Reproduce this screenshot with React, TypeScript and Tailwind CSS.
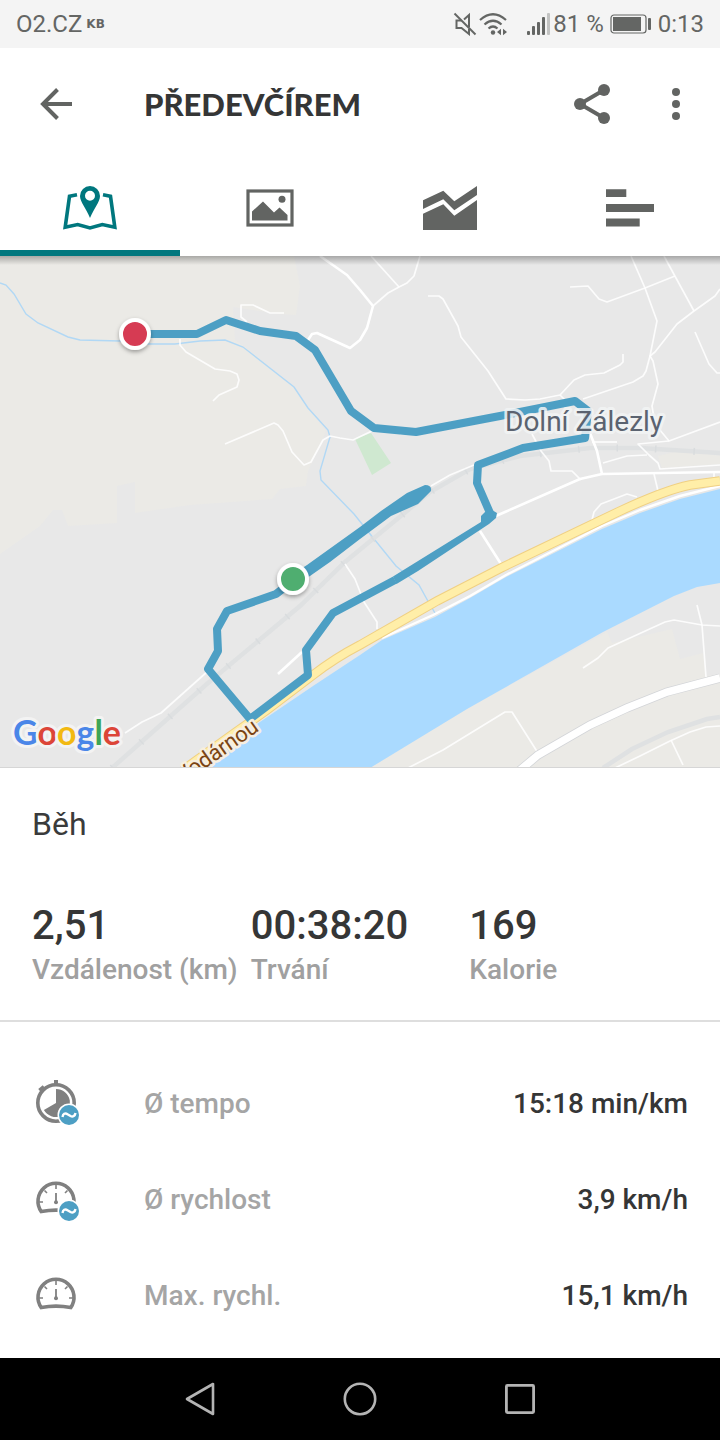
import type { ReactNode } from "react";

interface Stat {
  value: string;
  label: string;
}

interface DetailRow {
  icon: ReactNode;
  label: string;
  value: string;
}

const AverageBadge = () => (
  <>
    <circle cx="37" cy="35" r="11.5" fill="#fff" />
    <circle cx="37" cy="35" r="10" fill="#4d9fc4" />
    <path
      d="M30.5 37 C31 34 33 32.5 35.5 34.2 L38.5 36 C41 37.2 43 35.8 43.5 33"
      fill="none"
      stroke="#fff"
      strokeWidth="2.4"
    />
  </>
);

const StopwatchIcon = () => (
  <svg viewBox="0 0 48 48" className="size-12 text-[#808080]" fill="none" aria-hidden="true">
    <circle cx="24" cy="23" r="18.2" stroke="currentColor" strokeWidth="3.6" />
    <path d="M24 0 V5 M7.5 10.5 L12 6.8" stroke="currentColor" strokeWidth="4" />
    <path d="M24 23 V9 A14 14 0 1 1 11.9 30 Z" fill="currentColor" />
    <AverageBadge />
  </svg>
);

const GaugeIcon = ({ average = false }: { average?: boolean }) => (
  <svg viewBox="0 0 48 48" className="size-12 text-[#808080]" fill="none" stroke="currentColor" aria-hidden="true">
    <path d="M9.3 35.6 A18 18 0 1 1 38.7 35.6 Q24 32.6 9.3 35.6 Z" strokeWidth="3.6" />
    <path
      d="M24 8 V13 M7 26 H11 M37 26 H41 M12.5 14.5 L15 17 M35.5 14.5 L33 17"
      strokeWidth="1.6"
    />
    <path d="M24 17 V26" strokeWidth="1.8" />
    <circle cx="24" cy="26.3" r="2" fill="currentColor" stroke="none" />
    {average && (
      <g stroke="none">
        <AverageBadge />
      </g>
    )}
  </svg>
);

const stats: Stat[] = [
  { value: "2,51", label: "Vzdálenost (km)" },
  { value: "00:38:20", label: "Trvání" },
  { value: "169", label: "Kalorie" },
];

const details: DetailRow[] = [
  { icon: <StopwatchIcon />, label: "Ø tempo", value: "15:18 min/km" },
  { icon: <GaugeIcon average />, label: "Ø rychlost", value: "3,9 km/h" },
  { icon: <GaugeIcon />, label: "Max. rychl.", value: "15,1 km/h" },
];

const tabs = [
  {
    name: "Mapa",
    icon: (
      <svg viewBox="0 0 54 44" className="h-11 w-[54px]" fill="none" aria-hidden="true">
        <path
          d="M14 8.8 L6.5 10.3 L2.2 41.3 L14.7 38.5 L27 42 L39.3 38.5 L51.8 41.3 L47.5 10.3 L40 8.8"
          stroke="currentColor"
          strokeWidth="3.6"
        />
        <path
          fillRule="evenodd"
          d="M27 0 A10 10 0 0 1 37 10 C37 16 31 22 27 32 C23 22 17 16 17 10 A10 10 0 0 1 27 0 Z M27 4.8 A5 5 0 1 0 27 14.8 A5 5 0 1 0 27 4.8 Z"
          fill="currentColor"
        />
      </svg>
    ),
  },
  {
    name: "Fotky",
    icon: (
      <svg viewBox="0 0 48 38" className="h-[38px] w-12" aria-hidden="true">
        <rect x="2" y="2" width="44" height="34" fill="none" stroke="currentColor" strokeWidth="3.2" />
        <path d="M6 31.5 V22.5 L17 12.5 L28 23.5 L33.5 18.5 L41.5 26 V31.5 Z" fill="currentColor" />
        <circle cx="36" cy="10.3" r="3.5" fill="currentColor" />
      </svg>
    ),
  },
  {
    name: "Grafy",
    icon: (
      <svg viewBox="0 0 54 44" className="h-11 w-[54px]" fill="currentColor" aria-hidden="true">
        <path d="M0 14.3 L20.3 4.7 L31.3 15.3 L54 0 V9 L31.3 24.3 L20.3 13.3 L0 23 Z" />
        <path d="M0 27.7 L20.3 18.3 L31.3 29.7 L54 14 V44 H0 Z" />
      </svg>
    ),
  },
  {
    name: "Mezičasy",
    icon: (
      <svg viewBox="0 0 48 38" className="h-[38px] w-12" fill="currentColor" aria-hidden="true">
        <path d="M0 .3 H20.3 V8 H0 Z M0 15 H48 V23 H0 Z M0 29.5 H33.7 V37.5 H0 Z" />
      </svg>
    ),
  },
];

// minor streets, all drawn with the same thin white line
const streets = [
  "247,66 241,61 241,49 253,49 270,57 284,57",
  "180,83 180,89 186,96 215,113 230,115 237,118 239,124 237,131 219,139 213,145",
  "225,188 274,167 278,169 283,175 292,196 304,209 311,206 323,184 330,180 340,182 353,184 374,174",
  "371,0 399,31",
  "420,0 414,20 407,27 399,31 388,37 373,50",
  "428,40 439,40 443,43 458,70 461,81 488,115 506,143 525,144 540,143 560,139 574,124 585,119 604,117 620,109 623,106 623,98",
  "560,139 566,145",
  "583,143 633,126 643,120 646,115 650,100 657,65 645,32 631,0",
  "570,31 588,30 599,43 607,46 645,32 675,20",
  "664,0 694,55",
  "720,33 715,40 694,55 677,68 655,96 650,100 653,105 658,128 652,150 655,168 669,185 720,166",
  "695,76 709,108 717,117 720,117",
  "603,207 627,200 647,199",
  "592,186 617,186",
  "669,185 638,188 649,199 658,207 660,213 720,209",
  "532,178 541,195 549,205 551,215 572,215 581,224",
  "654,218 658,235",
  "592,264 594,256 601,248 627,238 637,241",
  "714,215 714,224",
  "431,230 450,219 474,209",
  "400,178 466,169 500,163",
  "345,308 355,323 364,346 377,366 377,373",
  "208,415 161,457 142,466 125,477",
  "583,412 598,402 608,392 665,366 674,364 702,369 720,370",
  "697,349 702,369 706,421",
  "408,512 443,494 505,456 512,456 538,497",
  "615,512 640,500 670,485 690,476 706,471 720,470",
  "671,484 683,509",
];

const collectors = [
  "320,0 347,19 360,34 373,50 367,72 360,84 350,92 317,77 312,78 308,84",
  "489,263 505,256 580,223 602,218 720,216",
  "588,172 597,195 602,218",
  "480,275 501,308",
  "278,418 302,396",
];

const ActivityMap = () => (
  <svg viewBox="0 0 720 512" className="block h-auto w-full" fill="none" role="img" aria-label="Trasa aktivity">
    <defs>
      <linearGradient id="bar-shadow" x1="0" y1="0" x2="0" y2="1">
        <stop offset="0" stopColor="#000" stopOpacity="0.28" />
        <stop offset="1" stopColor="#000" stopOpacity="0" />
      </linearGradient>
      <filter id="marker-shadow" x="-50%" y="-50%" width="200%" height="200%">
        <feDropShadow dx="0" dy="2" stdDeviation="2" floodOpacity="0.35" />
      </filter>
    </defs>

    {/* land */}
    <rect width="720" height="512" fill="#e8e8e8" />
    <g fill="#ebeae6">
      <path d="M0 0 H294 L300 30 L296 59 L280 58 L233 51 L235 84 L245 91 L294 131 L308 152 L326 175 L308 215 L306 230 L280 233 L272 243 L190 249 L135 257 V226 L117 230 V267 L68 270 L62 254 L53 254 L40 270 L0 298 Z" />
      <path d="M370 512 L467 453 L607 376 L612 387 L672 373 L680 403 L703 397 L706 420 L720 418 V512 Z" />
      <path d="M658 200 L682 194 L720 200 V208 L662 212 Z" />
    </g>
    <path d="M355 183 L371 177 L391 207 L372 219 Z" fill="#cfe8d0" />

    {/* water */}
    <path
      d="M0 27 L6 29 L14 38 L26 58 L38 67 L68 81 L80 84 L120 85 L150 88 L175 88 L200 85 L225 84 L243 91 L294 131 L308 152 L328 174 L330 181 L320 215 L321 224 L354 258 L366 273 L396 310 L419 329 L429 347 L435 357"
      stroke="#b1d8f5"
      strokeWidth="1.4"
    />
    <path
      d="M200 512 L257 468 L313 430 L360 399 L382 384 L435 361 L470 342 L506 321 L602 273 L640 257 L680 243 L720 233 V327 L697 331 L674 340 L603 376 L467 453 L370 512 Z"
      fill="#aadaff"
    />

    {/* railway */}
    <g stroke="#dfe1e2" strokeWidth="4.5">
      <path d="M112 512 L208 427 L300 350 L345 306 L430 236 L470 213 L520 200 L590 192 L640 192 L720 197" />
      <path d="M603 512 L632 493 L668 476 L707 463 L720 461" />
    </g>
    <path
      d="M112 512 L208 427 L300 350 L345 306 L430 236 L470 213 L520 200 L590 192 L640 192 L720 197"
      stroke="#d9dcde"
      strokeWidth="7"
      strokeDasharray="1.5 37"
    />

    {/* roads */}
    <g stroke="#fff" strokeLinejoin="round">
      {streets.map((points) => (
        <polyline key={points} points={points} strokeWidth="1.7" strokeOpacity="0.85" />
      ))}
      {collectors.map((points) => (
        <polyline key={points} points={points} strokeWidth="2.6" />
      ))}
      <path d="M382 382 L433 359 L470 340 L506 319 L602 270 L640 254 L680 240 L720 230" strokeWidth="2.4" />
    </g>
    <path d="M519 515 L538 499 L590 469 L627 452 L667 436 L720 422" stroke="#d3d5d8" strokeWidth="9" />
    <path d="M519 515 L538 499 L590 469 L627 452 L667 436 L720 422" stroke="#fff" strokeWidth="7.5" />
    <path
      d="M183 514 L233 478 L267 454 L313 419 Q335 402 360 389 L437 345 L503 311 L618 256 Q665 234 690 229 L720 225"
      stroke="#f0d083"
      strokeWidth="9.5"
    />
    <path
      d="M183 514 L233 478 L267 454 L313 419 Q335 402 360 389 L437 345 L503 311 L618 256 Q665 234 690 229 L720 225"
      stroke="#ffeea8"
      strokeWidth="7.5"
    />

    {/* recorded track */}
    <g stroke="#4d9fc4" strokeWidth="8" strokeLinejoin="round">
      <path d="M135 78 H197 L226 64 L260 75 L296 80 L315 94 L351 155 L374 172 L416 176 L500 160 L575 145 L588 155 L585 182 L523 192 L478 209 L477 227 L490 257" />
      <path d="M395 324 L333 357 L306 394 L308 419 L250 463 L208 413 L218 395 L217 373 L227 355 L276 338 L293 325" />
    </g>
    <g fill="#4d9fc4">
      <path d="M481 266 L393 320.5 L396.500 328 L418 315 L489 268 L496 262 L497 257 L492 254 L485 256 L481 260 Z" />
      <path d="M293 318 L307 309 L360 271 L381 255 L407 237 L425 229 Q432 229 431 235 L418 248 L391 260 L360 283 L330 306 L310 320 L293 330 Z" />
    </g>

    {/* labels */}
    <text
      x="505"
      y="175"
      fontSize="28"
      fill="#5b6370"
      stroke="#f2f4f5"
      strokeOpacity="0.85"
      strokeWidth="6"
      strokeLinejoin="round"
      paintOrder="stroke"
      className="font-['Roboto',sans-serif]"
    >
      Dolní Zálezly
    </text>
    <text
      x="260"
      y="474"
      fontSize="22"
      textAnchor="end"
      transform="rotate(-35 260 474)"
      fill="#7b4413"
      stroke="#f7efdf"
      strokeWidth="5"
      strokeLinejoin="round"
      paintOrder="stroke"
      className="font-['Roboto',sans-serif]"
    >
      Vodárnou
    </text>
    <text
      x="13"
      y="489"
      fontSize="34"
      fontWeight="700"
      stroke="#f3f3f3"
      strokeWidth="6"
      strokeLinejoin="round"
      paintOrder="stroke"
      className="font-['Lato',sans-serif]"
    >
      <tspan fill="#4a86e8">G</tspan>
      <tspan fill="#dc4538">o</tspan>
      <tspan fill="#f2b912">o</tspan>
      <tspan fill="#4a86e8">g</tspan>
      <tspan fill="#3da456">l</tspan>
      <tspan fill="#dc4538">e</tspan>
    </text>

    {/* start and finish */}
    <g stroke="#fff" strokeWidth="4" filter="url(#marker-shadow)">
      <circle cx="135" cy="78" r="14" fill="#d63a53" />
      <circle cx="293" cy="323" r="14" fill="#4fae70" />
    </g>

    <rect width="720" height="9" fill="url(#bar-shadow)" />
    <rect y="511" width="720" height="1" fill="#d6d6d6" />
  </svg>
);

const StatusBar = () => (
  <div className="flex h-12 items-center justify-between bg-[#f4f4f4] px-4 text-2xl text-[#646664]">
    <div className="flex items-center gap-1">
      <span>O2.CZ</span>
      <span className="font-['DejaVu_Sans',sans-serif] text-xs font-bold">KB</span>
    </div>
    <div className="flex items-center">
      <svg viewBox="0 0 24 24" className="mr-0.5 size-6" fill="none" stroke="currentColor" strokeWidth="2" aria-hidden="true">
        <path d="M16 15 V3 L11 7.5 M8.5 8.5 H3.5 V16 H8.5 L16 22 V17" />
        <path d="M1.5 1.5 L22.5 22.5" />
      </svg>
      <svg viewBox="0 0 28 24" className="mr-5 h-6 w-7" fill="none" stroke="currentColor" strokeWidth="2.2" aria-hidden="true">
        <path d="M1 8 Q14 -3.5 27 8 M5.5 12.5 Q14 5 22.5 12.5 M9.5 16.5 Q14 12.5 18.5 16.5" />
        <circle cx="14" cy="20.5" r="2.2" fill="currentColor" stroke="none" />
        <path d="M18 20 L22 16.8 V23.2 Z M28 20 L24 16.8 V23.2 Z" fill="currentColor" stroke="none" />
      </svg>
      <svg viewBox="0 0 24 24" className="mr-0.5 size-6" fill="currentColor" aria-hidden="true">
        <rect x="0" y="19" width="3" height="4" rx="1" />
        <rect x="5" y="14" width="3" height="9" rx="1" />
        <rect x="10" y="10" width="3" height="13" rx="1" />
        <rect x="15" y="5" width="3" height="18" rx="1" />
        <rect x="20" y="1" width="3" height="22" rx="1" opacity="0.35" />
      </svg>
      <span>81 %</span>
      <svg viewBox="0 0 42 20" className="mx-1.5 h-5 w-[42px]" fill="currentColor" aria-hidden="true">
        <rect x="1" y="1" width="35" height="18" rx="3" fill="none" stroke="currentColor" strokeWidth="1.2" />
        <rect x="3" y="3" width="28" height="14" />
        <rect x="38" y="4" width="3" height="12" rx="1" />
      </svg>
      <span>0:13</span>
    </div>
  </div>
);

const App = () => {
  return (
    <div className="flex min-h-screen flex-col bg-white font-['Roboto',sans-serif]">
      <StatusBar />

      <header className="flex h-28 items-center px-4 text-[#626462]">
        <button type="button" aria-label="Zpět" className="flex size-20 items-center justify-center">
          <svg viewBox="0 0 32 32" className="size-8" fill="none" stroke="currentColor" strokeWidth="4" aria-hidden="true">
            <path d="M32 16 H3 M17.5 1.5 L3 16 L17.5 30.5" />
          </svg>
        </button>
        <h1 className="ml-12 flex-1 font-['Lato',sans-serif] text-[31px] leading-10 font-black text-[#353636]">
          PŘEDEVČÍREM
        </h1>
        <div className="flex gap-7">
          <button type="button" aria-label="Sdílet" className="flex size-14 items-center justify-center">
            <svg viewBox="0 0 36 40" className="h-10 w-9" fill="currentColor" aria-hidden="true">
              <path d="M30 6 L6 20 L30 34" fill="none" stroke="currentColor" strokeWidth="4" />
              <circle cx="30" cy="6" r="6" />
              <circle cx="6" cy="20" r="6" />
              <circle cx="30" cy="34" r="6" />
            </svg>
          </button>
          <button type="button" aria-label="Další možnosti" className="flex size-14 items-center justify-center">
            <svg viewBox="0 0 8 32" className="h-8 w-2" fill="currentColor" aria-hidden="true">
              <circle cx="4" cy="4" r="4" />
              <circle cx="4" cy="16" r="4" />
              <circle cx="4" cy="28" r="4" />
            </svg>
          </button>
        </div>
      </header>

      <nav className="grid h-24 grid-cols-4">
        {tabs.map((tab, index) => (
          <button
            key={tab.name}
            type="button"
            aria-label={tab.name}
            className={`relative flex items-center justify-center ${
              index === 0 ? "text-[#00777e]" : "text-[#626462]"
            }`}
          >
            {tab.icon}
            {index === 0 && <span className="absolute inset-x-0 bottom-0 h-1.5 bg-[#00777e]" />}
          </button>
        ))}
      </nav>

      <main className="flex-1">
        <ActivityMap />

        <section className="border-b-2 border-[#dedede] px-8 pt-9 pb-[30px]">
          <h2 className="text-[32px] leading-10 text-[#3a3b3b]">Běh</h2>
          <dl className="mt-[58px] grid grid-cols-3">
            {stats.map((stat) => (
              <div key={stat.label} className="flex flex-col-reverse">
                <dt className="text-[28px] leading-10 font-medium whitespace-nowrap text-[#a0a0a0]">{stat.label}</dt>
                <dd className="text-[40px] leading-12 font-medium text-[#353636]">{stat.value}</dd>
              </div>
            ))}
          </dl>
        </section>

        <dl className="pt-[34px]">
          {details.map((row) => (
            <div key={row.label} className="flex h-24 items-center px-8 text-[28px] font-medium">
              <dt className="flex flex-1 items-center gap-16 text-[#a5a5a5]">
                {row.icon}
                {row.label}
              </dt>
              <dd className="text-[#353636]">{row.value}</dd>
            </div>
          ))}
        </dl>
      </main>

      <footer className="flex h-[82px] items-center justify-center gap-28 bg-black text-[#b4b4b4]">
        <button type="button" aria-label="Zpět v systému" className="flex size-12 items-center justify-center">
          <svg viewBox="0 0 36 36" className="size-9" fill="none" stroke="currentColor" strokeWidth="2.6" strokeLinejoin="round" aria-hidden="true">
            <path d="M31 3 V33 L5 18 Z" />
          </svg>
        </button>
        <button type="button" aria-label="Domů" className="flex size-12 items-center justify-center">
          <svg viewBox="0 0 36 36" className="size-9" fill="none" stroke="currentColor" strokeWidth="2.6" aria-hidden="true">
            <circle cx="18" cy="18" r="15.2" />
          </svg>
        </button>
        <button type="button" aria-label="Poslední aplikace" className="flex size-12 items-center justify-center">
          <svg viewBox="0 0 36 36" className="size-9" fill="none" stroke="currentColor" strokeWidth="2.8" strokeLinejoin="round" aria-hidden="true">
            <rect x="4.4" y="4.4" width="27.2" height="27.2" rx="1" />
          </svg>
        </button>
      </footer>
    </div>
  );
};

export default App;
